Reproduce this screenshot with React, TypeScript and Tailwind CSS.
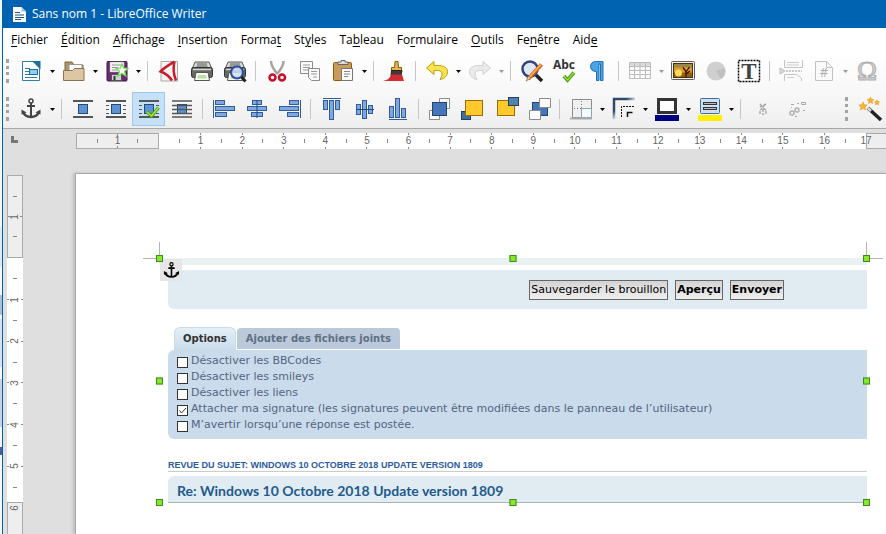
import { Fragment, type ReactNode } from "react";

type Tool = { label: string; icon: ReactNode; menu?: boolean; sep?: boolean; active?: boolean; off?: boolean };

const menus: [string, string, string][] = [
  ["", "F", "ichier"],
  ["", "É", "dition"],
  ["", "A", "ffichage"],
  ["", "I", "nsertion"],
  ["Forma", "t", ""],
  ["St", "y", "les"],
  ["Ta", "b", "leau"],
  ["Fo", "r", "mulaire"],
  ["", "O", "utils"],
  ["Fe", "n", "être"],
  ["Aid", "e", ""],
];

function Svg({ children }: { children: ReactNode }) {
  return (
    <svg width="24" height="24" viewBox="0 0 24 24" fill="none" className="shrink-0 overflow-visible" aria-hidden="true">
      {children}
    </svg>
  );
}

const AnchorShape = ({ color }: { color: string }) => (
  <g stroke={color} fill="none">
    <circle cx="12" cy="4" r="2" strokeWidth="1.500" />
    <path d="M12 6V20M8 9h8" strokeWidth="2" />
    <path d="M4 15c1.500 3.500 4.500 5 8 5s6.500-1.500 8-5" strokeWidth="2.400" />
    <path d="M2.500 17.500 2.500 12.500l5 3zM21.500 17.500 21.500 12.500l-5 3z" fill={color} stroke="none" />
  </g>
);

const PrinterShape = () => (
  <g>
    <path d="M5 3h14l2.500 6h-19z" fill="#d9dbd6" stroke="#555753" />
    <path d="M7 5h10M6.500 7h11" stroke="#555753" />
    <rect x="1.500" y="8.500" width="21" height="10" rx="2" fill="#66695f" stroke="#2e3436" />
    <path d="M3 10.500h18" stroke="#d3d7cf" strokeWidth="1.500" />
    <path d="M6 13.500h12l1.500 8h-15z" fill="#fff" stroke="#555753" />
    <path d="M8 16h8l.8 3.500H7.200z" fill="#b9e29c" />
  </g>
);

const curvedArrow = "M9 2.500 1.500 9 9 15.500v-4c5-.5 8 .5 8 3.500 0 2-1 3.500-2 5.500 5-1 7.500-4 7.500-8 0-5-6-6.500-13.500-6z";

const standard: Tool[] = [
  {
    label: "Nouveau", menu: true,
    icon: (
      <Svg>
        <path d="M3.500 2.500h11l6 6v13h-17z" fill="#fff" stroke="#2c7fa8" />
        <path d="M13 2h8.500v8.500z" fill="#1a6e98" />
        <path d="M6 9.500h5M6 12.500h4M6 15.500h4M6 18.500h12" stroke="#2682ad" />
        <rect x="10.500" y="10.500" width="8" height="5" fill="#8fd0f0" stroke="#1a6e98" />
      </Svg>
    ),
  },
  {
    label: "Ouvrir", menu: true,
    icon: (
      <Svg>
        <path d="M3 19V3h7l2 3h9v14H3z" fill="#b39368" stroke="#7b6240" />
        <path d="M7 5.500h13v8H7z" fill="#fff" stroke="#999" />
        <path d="M1.500 21.500v-10h9l2-2h9.500v12z" fill="#dcc6a4" stroke="#8d7450" />
      </Svg>
    ),
  },
  {
    label: "Enregistrer", menu: true, sep: true,
    icon: (
      <Svg>
        <rect x="2" y="2.500" width="20" height="19.500" rx="1" fill="#6c2a72" stroke="#351a3a" />
        <rect x="5" y="3" width="14" height="10" fill="#f3f3f3" stroke="#aaa" strokeWidth=".5" />
        <path d="M7 6h9M7 8.500h6M7 11h5" stroke="#999" />
        <rect x="6.500" y="15.500" width="10" height="6" fill="#cfcfcf" stroke="#555" />
        <path d="M8.500 17h2v4h-2z" fill="#333" />
        <path d="m17 5 1.500 4 4.500.5-3.500 3 1.500 4.500-4-2.500-4 2.500 1.500-4.500-3.500-3 4.500-.5z" fill="#f4fff0" stroke="#73d95a" strokeWidth="1.200" />
      </Svg>
    ),
  },
  {
    label: "Exporter au format PDF",
    icon: (
      <Svg>
        <path d="M4 2.500h16.500v19.500H4z" fill="#f6f4f2" stroke="#aaa" />
        <path d="M17.500 2.500C12 6 6 9.500 3.500 12.500 8 14 12 17 15 21.500M17.500 2.500c-1.500 6-1 13 1.500 19" stroke="#c81e2b" strokeWidth="2.500" />
      </Svg>
    ),
  },
  { label: "Imprimer", icon: <Svg><PrinterShape /></Svg> },
  {
    label: "Aperçu", sep: true,
    icon: (
      <Svg>
        <PrinterShape />
        <circle cx="14" cy="13.500" r="6" fill="#cfe0fa" fillOpacity=".85" stroke="#2f4ea0" strokeWidth="2.200" />
        <path d="m18.500 18 4 4.500" stroke="#222" strokeWidth="3" />
      </Svg>
    ),
  },
  {
    label: "Couper",
    icon: (
      <Svg>
        <path d="M6 2c0 5 3 9 6.500 13M18.500 2c0 5-3 9-6.500 13" stroke="#a2a49f" strokeWidth="2.500" />
        <circle cx="7.500" cy="18.500" r="3" stroke="#c8102e" strokeWidth="2.500" />
        <circle cx="17" cy="18.500" r="3" stroke="#c8102e" strokeWidth="2.500" />
      </Svg>
    ),
  },
  {
    label: "Copier",
    icon: (
      <Svg>
        <path d="M2.500 2.500h12v12h-12z" fill="#fafafa" stroke="#8b8d88" />
        <path d="M5 6h7M5 8.500h7M5 11h5" stroke="#999" />
        <path d="M10.500 9.500h11v12h-8l-3-3z" fill="#fafafa" stroke="#8b8d88" />
        <path d="M13 12.500h6M13 15h6M15 18h4" stroke="#999" />
      </Svg>
    ),
  },
  {
    label: "Coller", menu: true, sep: true,
    icon: (
      <Svg>
        <rect x="2.500" y="3.500" width="18" height="18" rx="1" fill="#c99b5a" stroke="#8f5902" />
        <path d="M7 5.500V3h3V1.500h4V3h3v2.500z" fill="#ddd" stroke="#666" />
        <path d="M10.500 9.500h11v12h-11z" fill="#fafafa" stroke="#777" />
        <path d="M13 12.500h6M13 15h6M13 17.500h4" stroke="#888" />
      </Svg>
    ),
  },
  {
    label: "Cloner le formatage", sep: true,
    icon: (
      <Svg>
        <path d="M12 2.500h3l.5 6h3v4h-10v-4h3z" fill="#e3b34f" stroke="#8f5902" />
        <path d="M8.500 11.500h10.500l-1 5H8z" fill="#3f3a37" stroke="#222" />
        <path d="M8 15.500h11l2 6.500H0c5-1 7-3 8-6.500z" fill="#d22b33" />
      </Svg>
    ),
  },
  { label: "Annuler", menu: true, icon: <Svg><path d={curvedArrow} fill="#f9e44c" stroke="#b99c14" /></Svg> },
  {
    label: "Rétablir", menu: true, sep: true, off: true,
    icon: <Svg><path d={curvedArrow} transform="matrix(-1 0 0 1 24 0)" fill="#ebebeb" stroke="#cfcfcf" /></Svg>,
  },
  {
    label: "Rechercher et remplacer",
    icon: (
      <Svg>
        <circle cx="10" cy="10" r="7.500" fill="#dde8f7" stroke="#33417c" strokeWidth="2.500" />
        <path d="m16 16 6 6" stroke="#222" strokeWidth="3.500" />
        <path d="M21.500 5.500 8 20" stroke="#c25f12" strokeWidth="4" />
        <path d="M21 5.500 8.500 19" stroke="#fba64b" strokeWidth="2" />
        <path d="M8.500 17 6 22l5-2.500z" fill="#e9c9a0" stroke="#7a4a12" strokeWidth=".5" />
      </Svg>
    ),
  },
  {
    label: "Orthographe",
    icon: (
      <Svg>
        <text x="0" y="10" fontSize="12" fontWeight="700" fill="#333" fontFamily="Open Sans">Abc</text>
        <path d="m11 17 3.500 4L21 13.500" stroke="#4e9a06" strokeWidth="3.500" />
        <path d="m11 17 3.500 4L21 13.500" stroke="#9be34f" strokeWidth="1.200" />
      </Svg>
    ),
  },
  {
    label: "Marques de formatage", sep: true,
    icon: (
      <Svg>
        <path d="M17 21.500v-19H9.500a5 5 0 0 0 0 10h1v9h2.500V5h1.500v16.500z" fill="#4aa3e4" stroke="#1f6fb2" />
      </Svg>
    ),
  },
  {
    label: "Insérer un tableau", menu: true, off: true,
    icon: (
      <Svg>
        <path d="M1.500 3.500h21v16h-21z" fill="#fafafa" stroke="#bcbcbc" />
        <path d="M2 4h20v3.500H2z" fill="#dadada" />
        <path d="M1.500 7.500h21M1.500 11.500h21M1.500 15.500h21M6.500 3.500v16M12 3.500v16M17.500 3.500v16" stroke="#bcbcbc" />
      </Svg>
    ),
  },
  {
    label: "Image",
    icon: (
      <Svg>
        <rect x=".5" y="2.500" width="23" height="18" rx="1" fill="#f0f0ec" stroke="#5f615c" />
        <rect x="2.500" y="4.500" width="19" height="14" fill="#e59a25" stroke="#4a3210" />
        <path d="M3 13.500h18V18H3z" fill="#9a5c12" />
        <path d="M3 5h18v3.500H3z" fill="#9a8a45" />
        <circle cx="7.500" cy="14" r="3.500" fill="#ffdc5a" />
        <path d="M15 18.500v-6l-3-4M15 13l3.500-5M15 15l4-3" stroke="#2a1606" strokeWidth="1.300" />
      </Svg>
    ),
  },
  { label: "Diagramme", off: true, icon: <Svg><circle cx="12" cy="12" r="9.500" fill="#cfcfcf" /><path d="M12 12 21 9a9.500 9.500 0 0 1-4 11z" fill="#c0c0c0" /></Svg> },
  {
    label: "Zone de texte", sep: true,
    icon: (
      <Svg>
        <rect x="1.500" y="1.500" width="21" height="21" fill="#fff" stroke="#000" strokeWidth="1.500" strokeDasharray="2 1" />
        <text x="12" y="20" textAnchor="middle" fontSize="23" fontWeight="700" fill="#3f4543" fontFamily="Liberation Serif">T</text>
      </Svg>
    ),
  },
  {
    label: "Saut de page", off: true,
    icon: (
      <Svg>
        <path d="M5.500 1v7.500h18V1M5.500 22v-6.500h12l5 4V22" fill="#fafafa" stroke="#c4c4c4" />
        <path d="M8 3.500h12M8 6h12M8 18.500h7" stroke="#ccc" />
        <path d="M7 12h16" stroke="#999" strokeDasharray="2 1" />
        <path d="m1 9 5 3-5 3z" fill="#ddd" stroke="#bbb" />
      </Svg>
    ),
  },
  {
    label: "Champ", menu: true, off: true,
    icon: (
      <Svg>
        <path d="M3.500 2.500h11l6 6v13h-17z" fill="#fafafa" stroke="#c2c2c2" />
        <path d="M14.500 2.500v6h6" stroke="#c2c2c2" />
        <text x="12" y="18" textAnchor="middle" fontSize="13" fill="#aaa" fontFamily="Open Sans">#</text>
      </Svg>
    ),
  },
  {
    label: "Caractère spécial", off: true,
    icon: (
      <Svg>
        <text x="12" y="21" textAnchor="middle" fontSize="27" fill="#d0d0d0" stroke="#b0b0b0" strokeWidth="1" fontFamily="Liberation Serif">Ω</text>
      </Svg>
    ),
  },
];

const box = { fill: "#5f92d0", stroke: "#1f4a80" };
const bar = { fill: "#7fa8de", stroke: "#2f5c9c" };

const frame: Tool[] = [
  { label: "Ancre", menu: true, sep: true, icon: <Svg><AnchorShape color="#444" /></Svg> },
  {
    label: "Adaptation désactivée",
    icon: <Svg><path d="M2 4h20M2 20h20" stroke="#555" strokeWidth="2" /><rect x="7.500" y="7.500" width="9" height="9" {...box} /></Svg>,
  },
  {
    label: "Adaptation parallèle",
    icon: (
      <Svg>
        <path d="M2 4h20M2 20h20" stroke="#555" strokeWidth="2" />
        <path d="M2 8.500h3M2 12.500h3M2 16.500h3M19 8.500h3M19 12.500h3M19 16.500h3" stroke="#555" />
        <rect x="7.500" y="7.500" width="9" height="9" {...box} />
      </Svg>
    ),
  },
  {
    label: "Adaptation dynamique", active: true,
    icon: (
      <Svg>
        <path d="M2 4h20M2 20h20" stroke="#555" strokeWidth="2" />
        <path d="M2 8.500h3M2 12.500h3M2 16.500h3M19 8.500h3M19 12.500h3M19 16.500h3" stroke="#555" />
        <rect x="7.500" y="7.500" width="9" height="9" {...box} />
        <path d="m10 15 4.500 4 7-8.500" stroke="#4e9a06" strokeWidth="3.500" />
        <path d="m10 15 4.500 4 7-8.500" stroke="#a5ea4f" strokeWidth="1.500" />
      </Svg>
    ),
  },
  {
    label: "Adaptation à travers", sep: true,
    icon: (
      <Svg>
        <rect x="7.500" y="7.500" width="9" height="9" {...box} />
        <path d="M2 4h20M2 8.500h20M2 12.500h20M2 16.500h20M2 20h20" stroke="#555" strokeWidth="1.600" />
      </Svg>
    ),
  },
  {
    label: "Aligner à gauche",
    icon: <Svg><path d="M1.500 3v18" stroke="#2f5c9c" /><rect x="3.500" y="3.500" width="9" height="4" {...bar} /><rect x="3.500" y="9.500" width="19" height="4" {...bar} /><rect x="3.500" y="15.500" width="11" height="4" {...bar} /></Svg>,
  },
  {
    label: "Centrer",
    icon: <Svg><rect x="7.500" y="3.500" width="9" height="4" {...bar} /><rect x="2.500" y="9.500" width="19" height="4" {...bar} /><rect x="6.500" y="15.500" width="11" height="4" {...bar} /><path d="M12 3v18" stroke="#1f4a80" /></Svg>,
  },
  {
    label: "Aligner à droite", sep: true,
    icon: <Svg><path d="M22.500 3v18" stroke="#2f5c9c" /><rect x="11.500" y="3.500" width="9" height="4" {...bar} /><rect x="1.500" y="9.500" width="19" height="4" {...bar} /><rect x="9.500" y="15.500" width="11" height="4" {...bar} /></Svg>,
  },
  {
    label: "Aligner en haut",
    icon: <Svg><path d="M3 1.500h18" stroke="#2f5c9c" /><rect x="3.500" y="3.500" width="4" height="9" {...bar} /><rect x="9.500" y="3.500" width="4" height="19" {...bar} /><rect x="15.500" y="3.500" width="4" height="9" {...bar} /></Svg>,
  },
  {
    label: "Centrer verticalement",
    icon: <Svg><rect x="3.500" y="7.500" width="4" height="10" {...bar} /><rect x="9.500" y="3.500" width="4" height="18" {...bar} /><rect x="15.500" y="8.500" width="4" height="8" {...bar} /><path d="M3 12.500h18" stroke="#1f4a80" /></Svg>,
  },
  {
    label: "Aligner en bas", sep: true,
    icon: <Svg><path d="M3 22.500h18" stroke="#2f5c9c" /><rect x="3.500" y="9.500" width="4" height="11" {...bar} /><rect x="9.500" y="1.500" width="4" height="19" {...bar} /><rect x="15.500" y="11.500" width="4" height="9" {...bar} /></Svg>,
  },
  {
    label: "Premier plan",
    icon: (
      <Svg>
        <path d="M11.500 1.500h10v10h-10zM1.500 13.500h10v9h-10z" fill="#fafafa" stroke="#8b8d88" />
        <rect x="4.500" y="5.500" width="14" height="13" fill="#4577b8" stroke="#1f4478" />
      </Svg>
    ),
  },
  {
    label: "Vers l'avant",
    icon: (
      <Svg>
        <rect x=".5" y="14.500" width="9" height="8" fill="#3f6f9e" stroke="#1f3f60" />
        <rect x="4.500" y="3.500" width="17" height="15" fill="#ffc92b" stroke="#9c6a06" />
      </Svg>
    ),
  },
  {
    label: "Vers l'arrière",
    icon: (
      <Svg>
        <rect x="3.500" y="3.500" width="17" height="15" fill="#ffc92b" stroke="#9c6a06" />
        <rect x="14.500" y=".5" width="10" height="8" fill="#4f83ad" stroke="#1f3f60" />
      </Svg>
    ),
  },
  {
    label: "Arrière-plan", sep: true,
    icon: (
      <Svg>
        <rect x="5.500" y="5.500" width="15" height="13" fill="#4577b8" stroke="#1f4478" />
        <path d="M12.500 1.500h11v9h-11zM2.500 13.500h11v9h-11z" fill="#fafafa" stroke="#8b8d88" />
      </Svg>
    ),
  },
  {
    label: "Bordures", menu: true,
    icon: (
      <Svg>
        <path d="M3.500 2.500h19v18h-19z" fill="#eef1f0" stroke="#8b8d88" />
        <path d="M12.500 4v16M5 11.500h17" stroke="#777" strokeDasharray="1 2" />
        <path d="M12.500 11.500h10v9h-10z" fill="#f4fbff" stroke="#8aa5b5" />
        <path d="M1 21.500h22" stroke="#aaa" strokeWidth="2" />
      </Svg>
    ),
  },
  {
    label: "Style de bordure", menu: true,
    icon: (
      <Svg>
        <defs>
          <linearGradient id="edge" x1="0" y1="0" x2="1" y2="1">
            <stop offset=".3" stopColor="#2f4a6d" />
            <stop offset=".55" stopColor="#2f4a6d" stopOpacity="0" />
          </linearGradient>
        </defs>
        <path d="M2 22V2h21" stroke="url(#edge)" strokeWidth="2.500" />
        <path d="M9.500 20V9.500h13" stroke="#111" strokeDasharray="2 1" />
        <path d="M15.500 20v-4.500h5" stroke="#111" strokeWidth="1.500" />
      </Svg>
    ),
  },
  {
    label: "Couleur de bordure", menu: true,
    icon: (
      <Svg>
        <rect x="3.500" y="2.500" width="17" height="13" fill="#fff" stroke="#333" strokeWidth="3" />
        <path d="M0 18h24v6H0z" fill="#000080" />
      </Svg>
    ),
  },
  {
    label: "Arrière-plan de zone", menu: true, sep: true,
    icon: (
      <Svg>
        <rect x="2.500" y="1.500" width="19" height="15" rx="1" fill="#cfe0f5" stroke="#3f6ca8" />
        <path d="M5 6.500h14M5 11.500h14" stroke="#333" strokeWidth="3" />
        <path d="M6 6.500h12M6 11.500h12" stroke="#bbb" />
        <path d="M0 18h24v6H0z" fill="#ffee00" />
      </Svg>
    ),
  },
  {
    label: "Enchaîner les cadres", off: true,
    icon: <Svg><path d="m10 7 3 3 3-3M10 10l6-3M10 17v-4l3-2 3 2v4M13 12v6" stroke="#a5a5a5" strokeWidth="1.400" strokeDasharray="3 1" /></Svg>,
  },
  {
    label: "Délier les cadres", off: true,
    icon: (
      <Svg>
        <circle cx="9" cy="16" r="2" stroke="#b0b0b0" strokeWidth="1.500" />
        <circle cx="14" cy="13" r="2" stroke="#b0b0b0" strokeWidth="1.500" />
        <path d="M8 7.500h3M8 10.500h1M14 6.500h2M18.500 5.500h4v2h-4zM20 13.500h2M12 19.500h2" stroke="#a8a8a8" />
      </Svg>
    ),
  },
];

const Grip = () => <span className="h-6 w-[3px] shrink-0 border-l-3 border-dotted border-[#a3a3a3]" />;

function ToolButton({ tool }: { tool: Tool }) {
  return (
    <Fragment>
      <button
        type="button"
        aria-label={tool.label}
        aria-pressed={tool.active}
        disabled={tool.off}
        className={
          "flex h-[34px] w-[33px] shrink-0 items-center justify-center " +
          (tool.active ? "border border-[#99c9ef] bg-[#c5e0f7]" : "")
        }
      >
        {tool.icon}
      </button>
      {tool.menu && (
        <button type="button" aria-label={tool.label + " : options"} disabled={tool.off} className="flex h-[34px] w-[10px] shrink-0 items-center justify-center">
          <svg width="5" height="3" viewBox="0 0 5 3" aria-hidden="true">
            <path d="M0 0h5L2.500 3z" fill={tool.off ? "#999" : "#000"} />
          </svg>
        </button>
      )}
      {tool.sep && (
        <span className="flex w-[9px] shrink-0 justify-center">
          <span className="h-5 w-px bg-[#c6c6c6]" />
        </span>
      )}
    </Fragment>
  );
}

/* Marks centred on each half unit: a short tick, then a number between two edge ticks. */
function Marks({ labels, vertical = false }: { labels: string[]; vertical?: boolean }) {
  const edge = vertical ? "h-px w-[2px] shrink-0 bg-[#888]" : "h-[2px] w-px shrink-0 bg-[#888]";
  return (
    <>
      {labels.map((label, i) =>
        label ? (
          <span
            key={i}
            className={
              "flex min-h-0 min-w-0 flex-[2_2_0%] items-center justify-between leading-none " +
              (vertical ? "" : "flex-col")
            }
          >
            <span className={edge} />
            <span className={vertical ? "-rotate-90" : ""}>{label}</span>
            <span className={edge} />
          </span>
        ) : (
          <span key={i} className="flex min-h-0 min-w-0 flex-[2_2_0%] items-center justify-center">
            <span className={vertical ? "h-px w-1 bg-[#888]" : "h-1 w-px bg-[#888]"} />
          </span>
        ),
      )}
    </>
  );
}

const units = (n: number) => Array.from({ length: n * 2 - 1 }, (_, i) => (i % 2 ? String((i + 1) / 2) : ""));

const Handle = ({ place }: { place: string }) => (
  <span className={"absolute size-[7px] border border-[#3f8a1c] bg-[#86e82c] " + place} />
);

const options = [
  { text: "Désactiver les BBCodes", on: false },
  { text: "Désactiver les smileys", on: false },
  { text: "Désactiver les liens", on: false },
  { text: "Attacher ma signature (les signatures peuvent être modifiées dans le panneau de l’utilisateur)", on: true },
  { text: "M’avertir lorsqu’une réponse est postée.", on: false },
];

function ForumCapture() {
  const formButton = "h-5 border border-[#666] bg-linear-to-b from-[#d4d4d4] to-[#efefef] px-px leading-none text-black";
  return (
    <div className="relative font-['DejaVu_Sans',sans-serif] text-[11px]">
      <div className="h-[7px] bg-[#eaf1f1]" />
      <div className="mt-[5px] ml-[9px] flex h-[39px] items-center justify-end gap-[7px] rounded-l-md bg-[#e1ebf2] pr-[83px]">
        <button type="button" className={formButton}>Sauvegarder le brouillon</button>
        <button type="button" className={formButton + " font-bold"}>Aperçu</button>
        <button type="button" className={formButton + " font-bold"}>Envoyer</button>
      </div>

      <div className="mt-[18px] ml-[15px] flex items-end gap-px text-[10px] font-bold">
        <button type="button" className="h-[23px] rounded-t-md border-x border-t border-[#c9dbe9] bg-linear-to-b from-[#e4f0f8] to-[#cadceb] px-2 text-[#333]">Options</button>
        <button type="button" className="mb-px h-[21px] rounded-t-[4px] bg-[#bacadb] px-[9px] text-[#606f83]">Ajouter des fichiers joints</button>
      </div>
      <div className="ml-[9px] flex h-[89px] flex-col rounded-l-md bg-[#cadceb] pt-[3px] pl-[9px] text-[#536482]">
        {options.map((option) => (
          <label key={option.text} className="flex h-4 items-center gap-[3px] whitespace-nowrap">
            <span className="grid pt-[2px]">
              <input type="checkbox" defaultChecked={option.on} className="peer col-start-1 row-start-1 size-[11px] appearance-none border border-[#333] bg-white" />
              <svg width="11" height="11" viewBox="0 0 11 11" fill="none" className="pointer-events-none invisible col-start-1 row-start-1 peer-checked:visible" aria-hidden="true">
                <path d="m2.500 5.500 2 2.500 4.500-5" stroke="#333" />
              </svg>
            </span>
            {option.text}
          </label>
        ))}
      </div>

      <h3 className="mt-5 ml-[9px] h-[13px] border-b border-[#ccc] font-['Liberation_Sans',sans-serif] text-[9px] leading-3 font-bold whitespace-nowrap text-[#2a5a9f] uppercase">
        Revue du sujet: Windows 10 Octobre 2018 Update version 1809
      </h3>
      <h4 className="mt-1 ml-[9px] h-[27px] rounded-tl-md border-b border-[#aab4bb] bg-[#e1ebf2] pl-[9px] font-['Lato',sans-serif] text-[14px] leading-[30px] font-bold whitespace-nowrap text-[#1f5a8c]">
        Re: Windows 10 Octobre 2018 Update version 1809
      </h4>

      <span className="absolute -top-4 left-0 h-4 w-px bg-[#b5b5a8]" />
      <span className="absolute top-0 -left-4 h-px w-4 bg-[#b5b5b5]" />
      <span className="absolute -top-4 right-0 h-4 w-px bg-[#b5b5a8]" />
      <span className="absolute top-0 -right-4 h-px w-4 bg-[#b5b5b5]" />
      <span className="absolute top-px left-px flex size-[22px] items-center justify-center bg-[#e6e6e6]">
        <svg width="19" height="19" viewBox="0 0 24 24" aria-hidden="true"><AnchorShape color="#000" /></svg>
      </span>
      <Handle place="-top-[3px] -left-[3px]" />
      <Handle place="-top-[3px] left-1/2 -translate-x-1/2" />
      <Handle place="-top-[3px] -right-[3px]" />
      <Handle place="top-1/2 -left-[3px] -translate-y-1/2" />
      <Handle place="top-1/2 -right-[3px] -translate-y-1/2" />
      <Handle place="-bottom-[3px] -left-[3px]" />
      <Handle place="-bottom-[3px] left-1/2 -translate-x-1/2" />
      <Handle place="-bottom-[3px] -right-[3px]" />
    </div>
  );
}

export default function App() {
  return (
    <div className="flex h-screen overflow-hidden bg-white font-['Open_Sans',sans-serif] text-xs text-black">
      <div className="flex w-[2px] shrink-0 flex-col bg-[#f2f7fa] pt-[227px]">
        <span className="h-10 bg-[#dceaf4]" />
        <span className="mt-7 h-5 bg-[#a9c0d6]" />
        <span className="mt-1 h-12 bg-[#d3e2ee]" />
        <span className="mt-3 h-12 bg-[#c3d4e4]" />
        <span className="mt-5 h-2 bg-[#4a5f9a]" />
      </div>
      <div className="flex min-w-0 flex-1 flex-col border-l border-[#0063b1]">
        <header className="flex h-7 shrink-0 items-center gap-[6px] bg-[#0063b1] pl-[10px] text-white">
          <svg width="13" height="15" viewBox="0 0 13 15" aria-hidden="true">
            <path d="M0 0h8.500L13 4.500V15H0z" fill="#fff" />
            <path d="M8.500 0v4.500H13z" fill="#9cc4e4" />
            <path d="M2 5.500h5M2 8h9M2 10.500h9M2 12.500h6" stroke="#24557d" />
          </svg>
          <h1>Sans nom 1 - LibreOffice Writer</h1>
        </header>

        <nav className="flex h-6 shrink-0 items-center gap-[13px] pl-2">
          {menus.map(([before, key, after]) => (
            <button key={before + key + after} type="button" className="whitespace-nowrap">
              {before}<span className="underline underline-offset-2">{key}</span>{after}
            </button>
          ))}
        </nav>

        <div className="flex h-[38px] shrink-0 items-center bg-linear-to-b from-white to-[#f8f8f8] pl-[3px]">
          <Grip />
          <span className="w-[5px] shrink-0" />
          {standard.map((tool) => <ToolButton key={tool.label} tool={tool} />)}
        </div>
        <div className="flex h-[39px] shrink-0 items-center border-b border-[#a8a8a8] bg-linear-to-b from-[#f9f9f9] to-[#eee] pl-[3px]">
          <Grip />
          <span className="w-[5px] shrink-0" />
          {frame.map((tool) => <ToolButton key={tool.label} tool={tool} />)}
          <span className="min-w-0 flex-1" />
          <Grip />
          <span className="w-[5px] shrink-0" />
          <ToolButton
            tool={{
              label: "Assistant",
              icon: (
                <Svg>
                  <path d="m10 11 13 12" stroke="#222" strokeWidth="3.500" />
                  <path d="m10 11 3 3" stroke="#ddd" strokeWidth="2.500" />
                  <path d="m5 5 1.200 2.800 3 .2-2.300 2 .8 3L5 11.400 2.300 13l.8-3-2.300-2 3-.2zM12.500 0l1 2.300 2.500.2-2 1.600.6 2.400-2.100-1.300-2.100 1.300.6-2.400-2-1.600 2.500-.2zM19 3l.8 1.600 1.700.2-1.300 1.200.3 1.800L19 7l-1.500.8.3-1.800-1.300-1.200 1.700-.2z" fill="#ffb52b" stroke="#e0962a" strokeWidth=".6" />
                </Svg>
              ),
            }}
          />
        </div>

        <main className="flex min-h-0 flex-1 flex-col bg-[#dfdfdf]">
          <div className="mt-1 flex h-4 shrink-0 font-['Liberation_Sans',sans-serif] text-[10px] text-[#666]">
            <div className="w-[73px] shrink-0 pt-[3px] pl-2">
              <span className="block h-[7px] w-[7px] border-b-3 border-l-3 border-[#777]" />
            </div>
            <div className="flex w-[83px] shrink-0 border border-[#aaa] bg-[#eee]">
              <span className="flex-1" />
              <Marks labels={["", "1", ""]} />
              <span className="flex-1" />
            </div>
            <div className="flex min-w-0 flex-1 bg-white">
              <span className="flex-1" />
              <Marks labels={units(17)} />
              <span className="z-10 flex flex-1 items-center justify-end">
                <span className="flex w-0 justify-center">17</span>
              </span>
            </div>
            <div className="w-5 shrink-0 border-y border-l border-[#aaa] bg-[#eee]" />
          </div>

          <div className="flex min-h-0 flex-1 gap-[52px] overflow-hidden pt-[26px] pl-1">
            <div className="flex w-4 shrink-0 flex-col font-['Liberation_Sans',sans-serif] text-[10px] text-[#666]">
              <div className="flex h-[83px] shrink-0 flex-col border border-[#aaa] bg-[#eee]">
                <span className="flex-1" />
                <Marks labels={["", "1", ""]} vertical />
                <span className="flex-1" />
              </div>
              <div className="h-[244px] shrink-0 bg-white">
                <div className="relative z-10 flex h-[250px] flex-col">
                  <span className="flex-1" />
                  <Marks labels={units(6)} vertical />
                  <span className="flex flex-1 flex-col justify-end">
                    <span className="flex h-0 -rotate-90 items-center justify-center leading-none">6</span>
                  </span>
                </div>
              </div>
              <div className="flex-1 border-x border-t border-[#aaa] bg-[#eee]" />
            </div>
            <div className="-mt-[2px] min-w-0 flex-1 border-t border-l border-[#aaa] bg-white pt-[84px] pr-[19px] pl-[83px] shadow-[-2px_0_3px_#bbb]">
              <ForumCapture />
            </div>
          </div>
        </main>
      </div>
    </div>
  );
}
